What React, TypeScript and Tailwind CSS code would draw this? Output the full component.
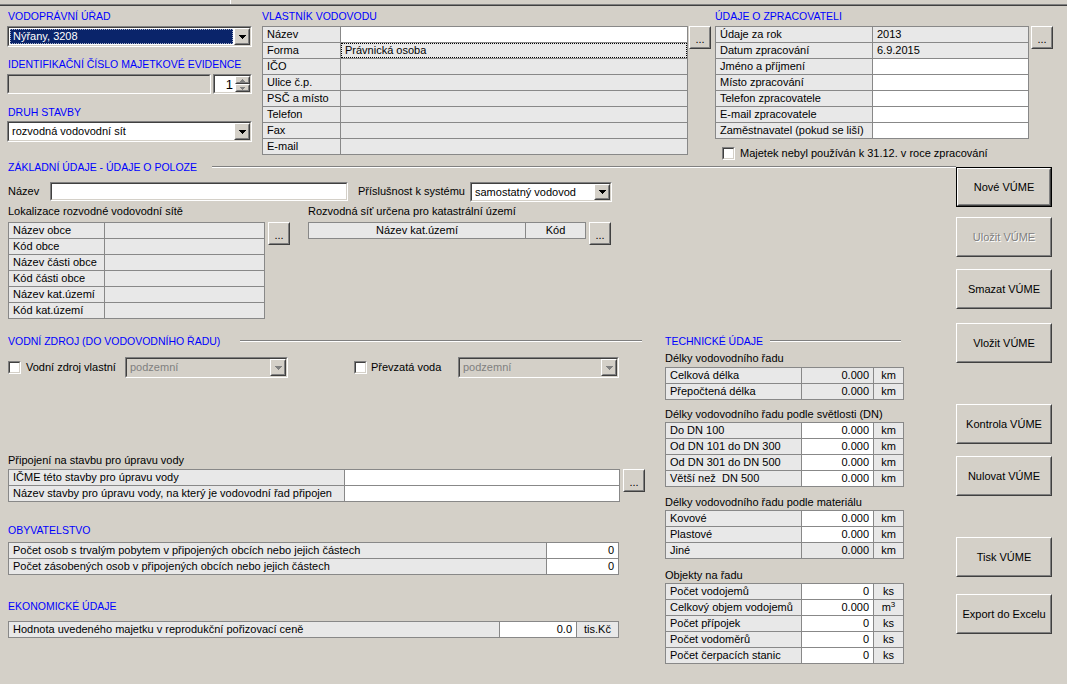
import React from "react";

type Node = React.ReactNode;

function Hdr({ children, className = "" }: { children: Node; className?: string }) {
  return (
    <div className={`h-[14px] leading-[14px] text-[10.5px] text-[#0000ff] whitespace-nowrap ${className}`}>{children}</div>
  );
}

function Sub({ children, className = "" }: { children: Node; className?: string }) {
  return <div className={`h-[14px] leading-[14px] whitespace-nowrap ${className}`}>{children}</div>;
}

function Sunken({ className = "", inner = "bg-white", children }: { className?: string; inner?: string; children?: Node }) {
  return (
    <div className={`shrink-0 border border-t-[#808080] border-l-[#808080] border-b-white border-r-white ${className}`}>
      <div className={`h-full w-full flex border border-t-[#404040] border-l-[#404040] border-b-[#d4d0c8] border-r-[#d4d0c8] ${inner}`}>
        {children}
      </div>
    </div>
  );
}

function Raised({ className = "", innerClass = "", children }: { className?: string; innerClass?: string; children?: Node }) {
  return (
    <div className={`shrink-0 bg-[#d4d0c8] border border-t-white border-l-white border-b-[#404040] border-r-[#404040] ${className}`}>
      <div className={`h-full w-full flex items-center justify-center border border-t-[#d4d0c8] border-l-[#d4d0c8] border-b-[#808080] border-r-[#808080] ${innerClass}`}>
        {children}
      </div>
    </div>
  );
}

function Arrow({ color = "#000000" }: { color?: string }) {
  return (
    <svg width="7" height="4" shapeRendering="crispEdges">
      <rect x="0" y="0" width="7" height="1" fill={color} />
      <rect x="1" y="1" width="5" height="1" fill={color} />
      <rect x="2" y="2" width="3" height="1" fill={color} />
      <rect x="3" y="3" width="1" height="1" fill={color} />
    </svg>
  );
}

function SmallArrow({ up }: { up?: boolean }) {
  return (
    <svg width="5" height="3" shapeRendering="crispEdges">
      {up ? (
        <>
          <rect x="2" y="0" width="1" height="1" fill="#808080" />
          <rect x="1" y="1" width="3" height="1" fill="#808080" />
          <rect x="0" y="2" width="5" height="1" fill="#808080" />
        </>
      ) : (
        <>
          <rect x="0" y="0" width="5" height="1" fill="#808080" />
          <rect x="1" y="1" width="3" height="1" fill="#808080" />
          <rect x="2" y="2" width="1" height="1" fill="#808080" />
        </>
      )}
    </svg>
  );
}

function Combo({
  className,
  text,
  selected,
  disabled,
}: {
  className: string;
  text: string;
  selected?: boolean;
  disabled?: boolean;
}) {
  return (
    <Sunken className={className} inner={disabled ? "bg-[#d4d0c8]" : "bg-white"}>
      <div className="flex-1 min-w-0 p-[1px] flex">
        <div
          className={`flex-1 flex items-center pl-[2px] whitespace-nowrap overflow-hidden ${
            selected ? "bg-[#0a246a] text-white border border-dotted border-[#a8b0c8]" : ""
          } ${disabled ? "text-[#808080]" : ""}`}
        >
          {text}
        </div>
      </div>
      <Raised className="w-[16px] h-full">
        <Arrow color={disabled ? "#808080" : "#000000"} />
      </Raised>
    </Sunken>
  );
}

function Dots({ className = "" }: { className?: string }) {
  return (
    <Raised className={`w-[22px] h-[23px] ${className}`} innerClass="pt-[3px]">
      <span className="leading-none">...</span>
    </Raised>
  );
}

function Check() {
  return <Sunken className="w-[13px] h-[13px]" inner="bg-white" />;
}

type Cell = { w: string; text?: Node; bg?: string; align?: "l" | "r" | "c" | "n" };

function Table({ rows, className = "" }: { rows: Cell[][]; className?: string }) {
  return (
    <div className={`shrink-0 w-fit border-t border-l border-[#888888] ${className}`}>
      {rows.map((r, i) => (
        <div key={i} className="flex h-[16px]">
          {r.map((c, j) => (
            <div
              key={j}
              className={`${c.w} h-full shrink-0 border-r border-b border-[#888888] flex items-center whitespace-nowrap overflow-hidden ${
                c.bg ?? "bg-[#e8e8e8]"
              } ${
                c.align === "r"
                  ? "justify-end pr-[4px]"
                  : c.align === "c"
                  ? "justify-center"
                  : c.align === "n"
                  ? ""
                  : "pl-[4px]"
              }`}
            >
              {c.text}
            </div>
          ))}
        </div>
      ))}
    </div>
  );
}

function Btn({ children, def, disabled, className = "" }: { children: Node; def?: boolean; disabled?: boolean; className?: string }) {
  const label = disabled ? (
    <span className="text-[#808080] [text-shadow:1px_1px_0_#ffffff]">{children}</span>
  ) : (
    <span>{children}</span>
  );
  if (def) {
    return (
      <div className={`w-[96px] h-[40px] border border-black ${className}`}>
        <Raised className="w-full h-full">{label}</Raised>
      </div>
    );
  }
  return <Raised className={`w-[96px] h-[40px] ${className}`}>{label}</Raised>;
}

function Line({ className = "" }: { className?: string }) {
  return <div className={`h-[2px] border-t border-t-[#808080] border-b border-b-white ${className}`} />;
}

const techRow = (label: string, val: string, unit: Node, white = true): Cell[] => [
  { w: "w-[136px]", text: label },
  { w: "w-[72px]", text: val, bg: white ? "bg-white" : undefined, align: "r" },
  { w: "w-[30px]", text: unit, align: "c" },
];

export default function App() {
  const ownerLabels = ["Název", "Forma", "IČO", "Ulice č.p.", "PSČ a místo", "Telefon", "Fax", "E-mail"];
  const ownerRows: Cell[][] = ownerLabels.map((l, i) => [
    { w: "w-[78px]", text: l },
    i === 0
      ? { w: "w-[347px]", bg: "bg-white" }
      : i === 1
      ? {
          w: "w-[347px]",
          align: "n",
          text: (
            <div className="h-full w-full border border-dotted border-black flex items-center pl-[3px]">Právnická osoba</div>
          ),
        }
      : { w: "w-[347px]" },
  ]);

  const procRows: Cell[][] = [
    ["Údaje za rok", "2013"],
    ["Datum zpracování", "6.9.2015"],
    ["Jméno a příjmení", ""],
    ["Místo zpracování", ""],
    ["Telefon zpracovatele", ""],
    ["E-mail zpracovatele", ""],
    ["Zaměstnavatel (pokud se liší)", ""],
  ].map(([l, v], i) => [
    { w: "w-[157px]", text: l },
    { w: "w-[156px]", text: v, bg: i < 2 ? undefined : "bg-white" },
  ]);

  const locRows: Cell[][] = ["Název obce", "Kód obce", "Název části obce", "Kód části obce", "Název kat.území", "Kód kat.území"].map(
    (l) => [{ w: "w-[96px]", text: l }, { w: "w-[160px]" }]
  );

  return (
    <div className="w-[1067px] h-[684px] overflow-hidden bg-[#d4d0c8] text-[11px] text-black leading-none font-['Liberation_Sans',Arial,sans-serif]">
      {/* top strip */}
      <div className="h-[4px] flex">
        <div className="w-[230px]" />
        <div className="w-[1px] bg-white" />
      </div>
      <div className="h-[1px] bg-[#808080]" />
      <div className="h-[1px] bg-[#404040]" />

      {/* top section */}
      <div className="h-[154px] flex">
        {/* column A */}
        <div className="ml-[7px] w-[245px] pt-[3px] shrink-0">
          <Hdr className="pl-[1px]">VODOPRÁVNÍ ÚŘAD</Hdr>
          <Combo className="mt-[3px] w-[245px] h-[21px]" text="Nýřany, 3208" selected />
          <Hdr className="mt-[10px] pl-[1px]">IDENTIFIKAČNÍ ČÍSLO MAJETKOVÉ EVIDENCE</Hdr>
          <div className="mt-[3px] flex h-[20px] gap-[2px]">
            <Sunken className="w-[204px] h-[20px]" inner="bg-[#d4d0c8]" />
            <Sunken className="w-[39px] h-[20px]" inner="bg-white">
              <div className="flex-1 flex items-center justify-end pr-[2px] text-[13px]">1</div>
              <div className="w-[15px] flex flex-col">
                <Raised className="h-1/2 w-full">
                  <SmallArrow up />
                </Raised>
                <Raised className="h-1/2 w-full">
                  <SmallArrow />
                </Raised>
              </div>
            </Sunken>
          </div>
          <Hdr className="mt-[11px] pl-[1px]">DRUH STAVBY</Hdr>
          <Combo className="mt-[2px] w-[245px] h-[21px]" text="rozvodná vodovodní sít" />
        </div>

        {/* column B */}
        <div className="ml-[10px] w-[449px] pt-[3px] shrink-0">
          <Hdr>VLASTNÍK VODOVODU</Hdr>
          <div className="mt-[3px] flex items-start">
            <Table rows={ownerRows} />
            <Dots className="ml-[1px]" />
          </div>
        </div>

        {/* column C */}
        <div className="ml-[4px] w-[338px] pt-[3px] shrink-0">
          <Hdr>ÚDAJE O ZPRACOVATELI</Hdr>
          <div className="mt-[3px] flex items-start">
            <Table rows={procRows} />
            <Dots className="ml-[2px]" />
          </div>
          <div className="mt-[8px] h-[13px] flex items-center">
            <div className="ml-[7px]">
              <Check />
            </div>
            <span className="ml-[5px] whitespace-nowrap">Majetek nebyl používán k 31.12. v roce zpracování</span>
          </div>
        </div>
      </div>

      {/* lower section */}
      <div className="flex">
        <div className="w-[956px] shrink-0">
          <div className="h-[14px] flex items-center">
            <Hdr className="w-[212px] pl-[8px]">ZÁKLADNÍ ÚDAJE - ÚDAJE O POLOZE</Hdr>
            <Line className="flex-1" />
          </div>

          <div className="mt-[8px] h-[20px] flex items-start">
            <div className="w-[50px] pl-[8px] h-[19px] flex items-center">Název</div>
            <Sunken className="w-[298px] h-[19px]" inner="bg-white" />
            <div className="ml-[10px] w-[112px] h-[19px] flex items-center whitespace-nowrap">Příslušnost k systému</div>
            <Combo className="w-[142px] h-[20px]" text="samostatný vodovod" />
          </div>

          <div className="mt-[2px] flex">
            <div className="ml-[8px]">
              <Sub>Lokalizace rozvodné vodovodní sítě</Sub>
              <div className="mt-[4px] flex items-start">
                <Table rows={locRows} />
                <Dots className="ml-[3px]" />
              </div>
            </div>
            <div className="ml-[18px]">
              <Sub>Rozvodná síť určena pro katastrální území</Sub>
              <div className="mt-[4px] flex items-start">
                <Table
                  rows={[
                    [
                      { w: "w-[217px]", text: "Název kat.území", align: "c" },
                      { w: "w-[60px]", text: "Kód", align: "c" },
                    ],
                  ]}
                />
                <Dots className="ml-[3px]" />
              </div>
            </div>
          </div>

          <div className="mt-[15px] flex">
            {/* left panel */}
            <div className="ml-[8px] w-[637px] shrink-0">
              <div className="h-[14px] flex items-center">
                <Hdr className="w-[232px]">VODNÍ ZDROJ (DO VODOVODNÍHO ŘADU)</Hdr>
                <Line className="flex-1 mr-[3px]" />
              </div>
              <div className="mt-[9px] h-[21px] flex items-center">
                <Check />
                <span className="ml-[5px] w-[99px] whitespace-nowrap">Vodní zdroj vlastní</span>
                <Combo className="w-[163px] h-[21px]" text="podzemní" disabled />
                <div className="ml-[66px]">
                  <Check />
                </div>
                <span className="ml-[4px] w-[87px] whitespace-nowrap">Převzatá voda</span>
                <Combo className="w-[161px] h-[21px]" text="podzemní" disabled />
              </div>

              <Sub className="mt-[75px]">Připojení na stavbu pro úpravu vody</Sub>
              <div className="mt-[2px] flex items-start">
                <Table
                  rows={[
                    [
                      { w: "w-[336px]", text: "IČME této stavby pro úpravu vody" },
                      { w: "w-[275px]", bg: "bg-white" },
                    ],
                    [
                      { w: "w-[336px]", text: "Název stavby pro úpravu vody, na který je vodovodní řad připojen" },
                      { w: "w-[275px]", bg: "bg-white" },
                    ],
                  ]}
                />
                <Dots className="ml-[3px] h-[22px]" />
              </div>

              <Hdr className="mt-[21px]">OBYVATELSTVO</Hdr>
              <Table
                className="mt-[5px]"
                rows={[
                  [
                    { w: "w-[538px]", text: "Počet osob s trvalým pobytem v připojených obcích nebo jejich částech" },
                    { w: "w-[72px]", text: "0", bg: "bg-white", align: "r" },
                  ],
                  [
                    { w: "w-[538px]", text: "Počet zásobených osob v připojených obcích nebo jejich částech" },
                    { w: "w-[72px]", text: "0", bg: "bg-white", align: "r" },
                  ],
                ]}
              />

              <Hdr className="mt-[24px]">EKONOMICKÉ ÚDAJE</Hdr>
              <Table
                className="mt-[8px]"
                rows={[
                  [
                    { w: "w-[491px]", text: "Hodnota uvedeného majetku v reprodukční pořizovací ceně" },
                    { w: "w-[77px]", text: "0.0", bg: "bg-white", align: "r" },
                    { w: "w-[42px]", text: "tis.Kč", align: "c" },
                  ],
                ]}
              />
            </div>

            {/* technical panel */}
            <div className="ml-[20px] w-[240px] shrink-0">
              <div className="h-[14px] flex items-center">
                <Hdr className="w-[105px]">TECHNICKÉ ÚDAJE</Hdr>
                <Line className="w-[131px]" />
              </div>
              <Sub className="mt-[3px]">Délky vodovodního řadu</Sub>
              <Table
                className="mt-[2px]"
                rows={[techRow("Celková délka", "0.000", "km", false), techRow("Přepočtená délka", "0.000", "km", false)]}
              />
              <Sub className="mt-[7px]">Délky vodovodního řadu podle světlosti (DN)</Sub>
              <Table
                className="mt-[1px]"
                rows={[
                  techRow("Do DN 100", "0.000", "km"),
                  techRow("Od DN 101 do DN 300", "0.000", "km"),
                  techRow("Od DN 301 do DN 500", "0.000", "km"),
                  techRow("Větší než\u00a0 DN 500", "0.000", "km"),
                ]}
              />
              <Sub className="mt-[8px]">Délky vodovodního řadu podle materiálu</Sub>
              <Table
                className="mt-[1px]"
                rows={[techRow("Kovové", "0.000", "km"), techRow("Plastové", "0.000", "km"), techRow("Jiné", "0.000", "km", false)]}
              />
              <Sub className="mt-[9px]">Objekty na řadu</Sub>
              <Table
                className="mt-[1px]"
                rows={[
                  techRow("Počet vodojemů", "0", "ks"),
                  techRow(
                    "Celkový objem vodojemů",
                    "0.000",
                    <span>
                      m<sup className="text-[8px]">3</sup>
                    </span>
                  ),
                  techRow("Počet přípojek", "0", "ks"),
                  techRow("Počet vodoměrů", "0", "ks"),
                  techRow("Počet čerpacích stanic", "0", "ks"),
                ]}
              />
            </div>
          </div>
        </div>

        {/* buttons */}
        <div className="w-[96px] shrink-0 flex flex-col">
          <Btn def className="mt-[7px]">Nové VÚME</Btn>
          <Btn disabled className="mt-[10px]">Uložit VÚME</Btn>
          <Btn className="mt-[12px]">Smazat VÚME</Btn>
          <Btn className="mt-[14px]">Vložit VÚME</Btn>
          <Btn className="mt-[41px]">Kontrola VÚME</Btn>
          <Btn className="mt-[12px]">Nulovat VÚME</Btn>
          <Btn className="mt-[41px]">Tisk VÚME</Btn>
          <Btn className="mt-[17px]">Export do Excelu</Btn>
        </div>
      </div>
    </div>
  );
}
